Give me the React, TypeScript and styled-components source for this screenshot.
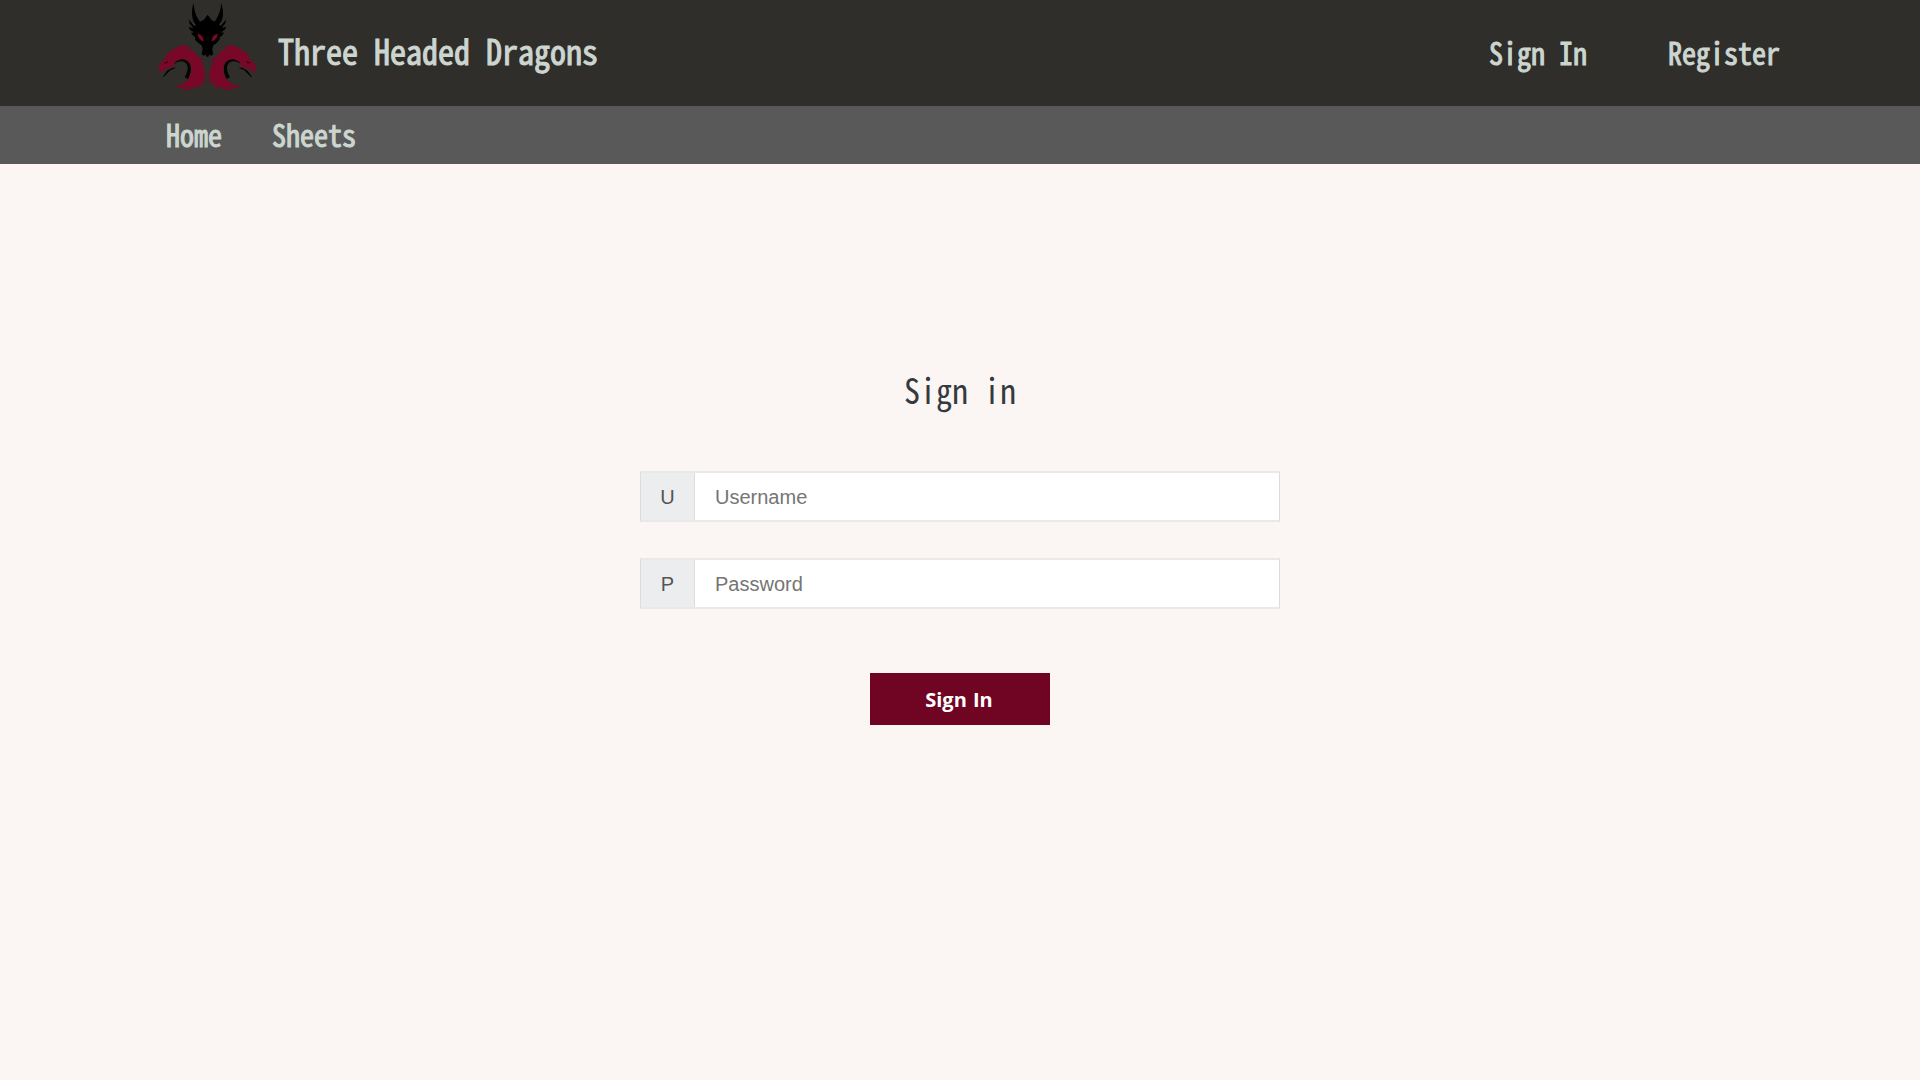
import React from "react";
import styled, { createGlobalStyle } from "styled-components";

const mono = `"Noto Sans Mono CJK JP", "Noto Sans CJK JP", "Liberation Mono", monospace`;

const GlobalStyle = createGlobalStyle`
  *, *::before, *::after { box-sizing: border-box; }
  body { margin: 0; background: #fbf6f3; color: #343a40; font-family: ${mono}; }
`;

const Page = styled.div`
  min-height: 100vh;
  display: flex;
  flex-direction: column;
  background: #fbf6f3;
`;

const Header = styled.header`
  height: 106px;
  padding: 0 140px 0 150px;
  display: flex;
  align-items: center;
  background: #302e2b;
`;

const Logo = styled.svg`
  width: 120px;
  height: 100px;
  margin: 0 8px 6px 0;
`;

const Label = styled.span<{ $size: number; $stroke?: number }>`
  display: inline-block;
  font-family: ${mono};
  font-size: ${(p) => p.$size}px;
  font-weight: 400;
  -webkit-text-stroke: ${(p) => p.$stroke ?? 1}px currentColor;
  line-height: 1;
  white-space: pre;
  transform: scaleY(1.1);
`;

const Brand = styled.a`
  margin-bottom: 4px;
  color: #ccd5cf;
`;

const Account = styled.nav`
  margin: 0 0 2px auto;
  display: flex;
  gap: 81px;
  color: #ccd5cf;
`;

const Menu = styled.nav`
  height: 58px;
  padding: 0 166px 2px;
  display: flex;
  align-items: center;
  gap: 50px;
  background: #595959;
  color: #ccd5cf;
`;

const Form = styled.form`
  width: 640px;
  margin: 0 auto;
  padding-top: 209px;
  display: flex;
  flex-direction: column;
  align-items: center;
`;

const Heading = styled.h1`
  margin: 0 0 66px;
  height: 32px;
  line-height: 1;
  font-size: 32px;
  font-weight: 400;
`;

const Field = styled.label`
  width: 100%;
  height: 51px;
  margin-bottom: 36px;
  display: flex;
  border: 1px solid #dcdcdd;
  border-top: 2px solid #eae8e8;
  border-bottom: 2px solid #eae8e8;
  background: #fff;
  font-family: "Liberation Sans", Arial, sans-serif;
  font-size: 20px;
`;

const Addon = styled.span`
  width: 54px;
  padding-top: 2px;
  display: flex;
  align-items: center;
  justify-content: center;
  border-right: 1px solid #dcdcdd;
  background: #ecedef;
  color: #555;
`;

const Input = styled.input`
  flex: 1;
  min-width: 0;
  padding: 2px 20px 0;
  border: 0;
  outline: 0;
  background: transparent;
  font: inherit;
  &::placeholder { color: #757575; opacity: 1; }
`;

const Submit = styled.button`
  width: 180px;
  height: 52px;
  margin-top: 28px;
  padding: 1px 2px 0 0;
  border: 0;
  background: #700423;
  color: #fff;
  font-family: "Open Sans", sans-serif;
  font-size: 20px;
  font-weight: 700;
  word-spacing: 1px;
`;

const SideDragon = () => (
  <>
    <path fill="#050505" d="M38 231 L51 212 L70 202 L77 204 L61 211 L42 230Z M72 191 C82 176 98 172 111 181 C126 192 126 216 114 238 L104 231 C115 214 116 197 107 189 C98 181 87 182 72 191Z" />
    <path fill="#780728" d="M25 207 L29 193 L40 181 L48 171 L51 157 L57 161 C65 149 79 139 96 137 C106 134 115 136 122 141 C114 140 111 142 109 145 C125 147 138 157 144 172 C151 176 159 178 165 178 C160 180 156 182 154 186 C163 202 169 219 165 237 L162 255 L156 244 C155 253 149 263 137 269 C139 264 140 260 139 256 C125 269 109 273 93 270 C103 267 110 263 114 260 C99 264 85 265 71 263 C91 257 107 248 115 237 C125 221 128 202 119 189 C109 175 91 174 76 185 L70 193 L73 204 L61 201 L48 205 L39 215 L31 214Z" />
    <path fill="#16090d" d="M41 190 L55 183 L51 190Z" />
  </>
);

const DragonLogo = () => (
  <Logo viewBox="0 0 360 300" aria-hidden="true">
    <SideDragon />
    <g transform="translate(344 0) scale(-1 1)">
      <SideDragon />
    </g>
    <path fill="#000" d="M131 9 C127 19 124 35 127 50 C128 61 132 69 138 74 L133 79 L116 58 L119 71 L130 84 L116 81 L121 91 L132 97 L123 99 L130 108 L135 110 L136 120 L145 129 L155 136 L158 148 L155 162 L162 168 L166 163 L170 170 L175 170 L179 163 L184 168 L189 162 L187 148 L190 136 L201 128 L209 118 L210 110 L216 107 L222 98 L213 97 L224 90 L229 80 L215 83 L226 70 L229 58 L212 78 L207 73 C214 67 218 57 219 46 C220 31 217 18 213 9 C213 25 209 44 194 65 L184 59 L173 44 L162 59 L150 65 C137 49 132 29 131 9Z" />
    <path fill="#780728" d="M143 101 C154 103 160 110 161 124 C151 121 144 114 143 101Z M203 101 C192 103 186 110 185 124 C195 121 202 114 203 101Z" />
  </Logo>
);

export default function App() {
  return (
    <Page>
      <GlobalStyle />
      <Header>
        <DragonLogo />
        <Brand><Label $size={32}>Three Headed Dragons</Label></Brand>
        <Account>
          <Label $size={28}>Sign In</Label>
          <Label $size={28}>Register</Label>
        </Account>
      </Header>
      <Menu>
        <Label $size={28}>Home</Label>
        <Label $size={28}>Sheets</Label>
      </Menu>
      <Form onSubmit={(e) => e.preventDefault()}>
        <Heading><Label $size={32} $stroke={0}>Sign in</Label></Heading>
        <Field><Addon>U</Addon><Input type="text" placeholder="Username" /></Field>
        <Field><Addon>P</Addon><Input type="password" placeholder="Password" /></Field>
        <Submit type="submit">Sign In</Submit>
      </Form>
    </Page>
  );
}
